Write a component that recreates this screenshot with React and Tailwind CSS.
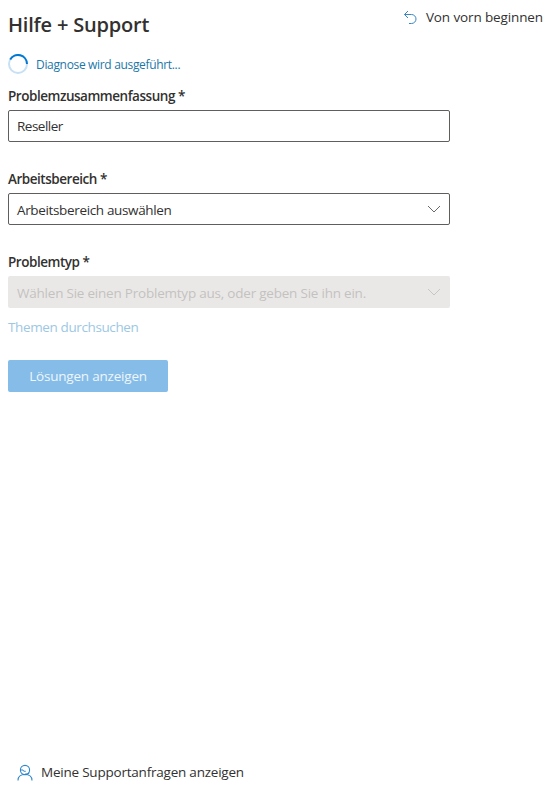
import React from "react";

const font = { fontFamily: '"Open Sans", "Noto Sans", sans-serif' };

function Chevron({ color }) {
  return (
    <svg width="14" height="8" viewBox="0 0 14 8" fill="none" stroke={color} strokeWidth="1">
      <path d="M1 1l6 6 6-6" />
    </svg>
  );
}

function Label({ children }) {
  return <div className="text-[13.5px] leading-[20px] font-semibold text-[#323130] tracking-[-0.47px] h-[20px]">{children}</div>;
}

export default function App() {
  return (
    <div style={font} className="h-[790px] w-full bg-white flex flex-col justify-between overflow-hidden">
      <div className="px-[8px]">
        <div className="flex justify-between items-start">
          <h1 className="mt-[11px] text-[20px] leading-[27px] font-semibold text-[#323130] tracking-[-0.2px]">Hilfe + Support</h1>
          <div className="mt-[7px] mr-[2px] flex items-center h-[20px] text-[13.5px] text-[#323130] tracking-[-0.12px]">
            <svg width="14" height="15" viewBox="0 0 14 15" fill="none" stroke="#3a86c4" strokeWidth="1" className="mr-[9px]">
              <path d="M5 1L1.5 4.5 5 8" />
              <path d="M1.5 4.5H8.5a4.5 4.5 0 0 1 0 9H6" />
            </svg>
            Von vorn beginnen
          </div>
        </div>
        <div className="mt-[16px] flex items-center h-[20px]">
          <svg width="20" height="20" viewBox="0 0 20 20" fill="none" strokeWidth="2">
            <circle cx="10" cy="10" r="9" stroke="#c7e0f4" />
            <path d="M2.2 5.5A9 9 0 0 1 19 10" stroke="#0078d4" />
          </svg>
          <span className="ml-[8px] text-[12px] leading-[20px] text-[#1b77a8] tracking-[-0.33px] translate-y-[1px]">Diagnose wird ausgeführt...</span>
        </div>
        <div className="mt-[12px]"><Label>Problemzusammenfassung *</Label></div>
        <div className="mt-[4px] w-[442px] h-[32px] border border-[#605e5c] rounded-[2px] px-[8px] flex items-center text-[13.5px] text-[#323130] tracking-[-0.5px]">Reseller</div>
        <div className="mt-[27px]"><Label>Arbeitsbereich *</Label></div>
        <div className="mt-[4px] w-[442px] h-[32px] border border-[#605e5c] rounded-[2px] px-[8px] flex items-center justify-between text-[13.5px] text-[#323130] tracking-[-0.35px]">
          <span className="translate-y-[1px]">Arbeitsbereich auswählen</span>
          <Chevron color="#6b6a68" />
        </div>
        <div className="mt-[27px]"><Label>Problemtyp *</Label></div>
        <div className="mt-[4px] w-[442px] h-[32px] bg-[#eae8e7] rounded-[2px] px-[9px] flex items-center justify-between text-[13.5px] text-[#c4c2c0] tracking-[-0.22px]">
          <span className="translate-y-[1px]">Wählen Sie einen Problemtyp aus, oder geben Sie ihn ein.</span>
          <Chevron color="#c8c6c4" />
        </div>
        <div className="mt-[9px] h-[20px] text-[13.5px] leading-[20px] text-[#9cc8e4] tracking-[-0.38px]">Themen durchsuchen</div>
        <div className="mt-[23px] w-[160px] h-[32px] bg-[#85bce8] rounded-[2px] flex items-center justify-center text-[13.5px] text-[#eef6fc] tracking-[-0.2px]">Lösungen anzeigen</div>
      </div>
      <div className="pl-[17px] pb-[8px] flex items-center h-[20px] box-content text-[13.5px] text-[#323130] tracking-[-0.22px]">
        <svg width="16" height="17" viewBox="0 0 16 17" fill="none" stroke="#2f86c9" strokeWidth="1.1">
          <circle cx="8" cy="6" r="4.6" />
          <path d="M1 16.5c0-4 3-6 7-6s7 2 7 6" />
          <path d="M3.4 6h2.2c.8 1 1.8 1.4 3 1.4M8.2 10h2.3c.8 0 1.5-.6 1.5-1.5" />
        </svg>
        <span className="ml-[8px]">Meine Supportanfragen anzeigen</span>
      </div>
    </div>
  );
}
